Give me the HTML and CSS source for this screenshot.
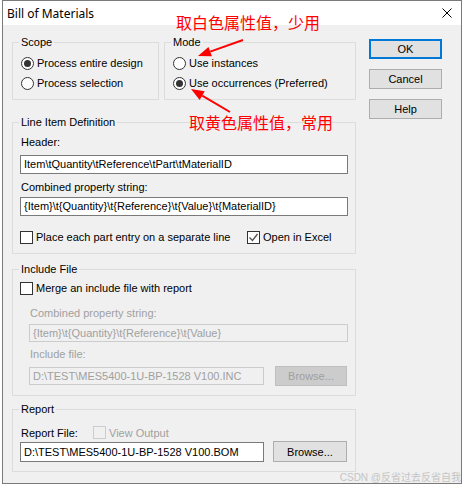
FILE: index.html
```html
<!DOCTYPE html>
<html>
<head>
<meta charset="utf-8">
<title>Bill of Materials</title>
<link rel="stylesheet" href="styles.css">
</head>
<body>
<div class="window">
  <div class="titlebar">
    <span class="title">Bill of Materials</span>
    <svg class="close" viewBox="0 0 10 10" width="10" height="10"><path d="M0.5 0.5 L9.5 9.5 M9.5 0.5 L0.5 9.5" stroke="#000" stroke-width="1" fill="none"/></svg>
  </div>
  <div class="client">
    <div class="main">
      <div class="toprow">
        <fieldset class="group scope">
          <legend>Scope</legend>
          <div class="opt"><span class="radio on"></span><span>Process entire design</span></div>
          <div class="opt"><span class="radio"></span><span>Process selection</span></div>
        </fieldset>
        <fieldset class="group mode">
          <legend>Mode</legend>
          <div class="opt"><span class="radio"></span><span>Use instances</span></div>
          <div class="opt"><span class="radio on"></span><span>Use occurrences (Preferred)</span></div>
        </fieldset>
      </div>

      <fieldset class="group lineitem">
        <legend>Line Item Definition</legend>
        <div class="lbl">Header:</div>
        <div class="edit e-header">Item\tQuantity\tReference\tPart\tMaterialID</div>
        <div class="lbl l-comb">Combined property string:</div>
        <div class="edit e-comb">{Item}\t{Quantity}\t{Reference}\t{Value}\t{MaterialID}</div>
        <div class="checkrow">
          <div class="chk wide"><span class="box"></span><span>Place each part entry on a separate line</span></div>
          <div class="chk"><span class="box"><svg viewBox="0 0 11 11" width="11" height="11"><path d="M1.5 5.5 L4.5 8.5 L9.5 2" stroke="#555" stroke-width="1.4" fill="none"/></svg></span><span>Open in Excel</span></div>
        </div>
      </fieldset>

      <fieldset class="group include">
        <legend>Include File</legend>
        <div class="chk merge"><span class="box"></span><span>Merge an include file with report</span></div>
        <div class="lbl dis l-icomb">Combined property string:</div>
        <div class="edit disabled e-icomb">{Item}\t{Quantity}\t{Reference}\t{Value}</div>
        <div class="lbl dis l-ifile">Include file:</div>
        <div class="filerow inc">
          <div class="edit disabled e-ifile">D:\TEST\MES5400-1U-BP-1528 V100.INC</div>
          <div class="btn btn-dis b-inc">Browse...</div>
        </div>
      </fieldset>

      <fieldset class="group report">
        <legend>Report</legend>
        <div class="reprow">
          <span class="replbl">Report File:</span>
          <div class="chk"><span class="box dis-box"></span><span class="distext">View Output</span></div>
        </div>
        <div class="filerow rep">
          <div class="edit e-rfile">D:\TEST\MES5400-1U-BP-1528 V100.BOM</div>
          <div class="btn b-rep">Browse...</div>
        </div>
      </fieldset>
    </div>

    <div class="buttons">
      <div class="btn default">OK</div>
      <div class="btn">Cancel</div>
      <div class="btn">Help</div>
    </div>
  </div>

  <svg class="annot" width="465" height="487" viewBox="0 0 465 487">
    <line x1="243" y1="40" x2="210.2" y2="51.6" stroke="#ff0000" stroke-width="2"/>
    <polygon points="198,56 211.9,56.3 208.5,46.9" fill="#ff0000"/>
    <line x1="230" y1="112" x2="202.2" y2="95.6" stroke="#ff0000" stroke-width="2"/>
    <polygon points="191,89 204.7,91.3 199.7,99.9" fill="#ff0000"/>
  </svg>
  <div class="note note1">取白色属性值，少用</div>
  <div class="note note2">取黄色属性值，常用</div>
  <div class="watermark">CSDN @反省过去反省自我</div>
</div>
</body>
</html>
```

FILE: styles.css
```css
html, body {
  margin: 0;
  background: #ffffff;
}
body {
  font-family: "Liberation Sans", Arial, sans-serif;
  font-size: 11px;
  color: #000;
}
.window {
  position: relative;
  margin-left: 2px;
  width: 460px;
  height: 484px;
  box-sizing: border-box;
  border: 1px solid #7a7a7a;
  background: #f0f0f0;
}
.titlebar {
  height: 24px;
  background: #ffffff;
  display: flex;
  align-items: center;
  padding-left: 4px;
}
.title {
  font-family: "Noto Sans", "Liberation Sans", sans-serif;
  font-size: 12px;
}
.close {
  margin-left: auto;
  margin-right: 9px;
}
.client {
  display: flex;
  gap: 13px;
  padding: 11px 0 0 9px;
}
.main {
  width: 344px;
  display: flex;
  flex-direction: column;
}
.toprow {
  display: flex;
  gap: 5px;
}
.group {
  margin: 0;
  min-width: 0;
  box-sizing: border-box;
  border: 1px solid #dcdcdc;
  padding: 0 7px 0 8px;
}
legend {
  padding: 0 2px;
  margin-left: -2px;
  line-height: 13px;
  font-size: 11px;
}
.group.scope {
  width: 147px;
  padding-top: 4px;
  padding-bottom: 6px;
}
.group.mode {
  width: 192px;
  padding-top: 4px;
  padding-bottom: 6px;
}
.opt {
  display: flex;
  align-items: center;
  height: 20px;
  gap: 3px;
  white-space: nowrap;
}
.radio {
  width: 13px;
  height: 13px;
  box-sizing: border-box;
  border: 1px solid #333;
  border-radius: 50%;
  background: #fff;
  display: flex;
  align-items: center;
  justify-content: center;
  flex: none;
}
.radio.on::after {
  content: "";
  width: 7px;
  height: 7px;
  border-radius: 50%;
  background: #333;
}
.lbl {
  line-height: 13px;
  height: 13px;
  white-space: nowrap;
}
.dis, .distext {
  color: #a0a0a0;
}
.edit {
  box-sizing: border-box;
  height: 19px;
  border: 1px solid #7a7a7a;
  background: #fff;
  padding-left: 3px;
  line-height: 17px;
  white-space: nowrap;
  overflow: hidden;
  margin-left: -1px;
}
.edit.disabled {
  background: #f0f0f0;
  border-color: #cccccc;
  color: #a0a0a0;
}
.group.lineitem {
  margin-top: 16px;
  padding-top: 7px;
  padding-bottom: 9px;
}
.e-header { margin-top: 6px; width: 328px; }
.l-comb { margin-top: 7px; }
.e-comb { margin-top: 3px; width: 328px; }
.checkrow {
  display: flex;
  margin-top: 14px;
  height: 14px;
  align-items: center;
}
.chk {
  display: flex;
  align-items: center;
  gap: 3px;
  white-space: nowrap;
}
.chk.wide {
  width: 227px;
  margin-left: -1px;
}
.box {
  width: 13px;
  height: 13px;
  box-sizing: border-box;
  border: 1px solid #333;
  background: #fff;
  display: flex;
  align-items: center;
  justify-content: center;
  flex: none;
}
.box.dis-box {
  border-color: #cccccc;
  background: #f0f0f0;
}
.group.include {
  margin-top: 9px;
  padding-top: 5px;
  padding-bottom: 9px;
}
.merge {
  height: 14px;
  margin-left: -1px;
}
.l-icomb { margin-top: 12px; margin-left: 9px; }
.e-icomb { margin-top: 4px; margin-left: 8px; width: 319px; height: 18px; line-height: 16px; }
.l-ifile { margin-top: 6px; margin-left: 9px; }
.filerow {
  display: flex;
  align-items: center;
}
.filerow.inc {
  margin-top: 5px;
  height: 20px;
  margin-left: 8px;
  gap: 11px;
}
.e-ifile { width: 235px; height: 18px; line-height: 16px; margin-left: 0; }
.group.report {
  margin-top: 7px;
  padding-top: 10px;
  padding-bottom: 9px;
}
.reprow {
  display: flex;
  align-items: center;
  height: 13px;
}
.replbl {
  width: 72px;
}
.filerow.rep {
  margin-top: 2px;
  height: 21px;
  align-items: flex-end;
  gap: 9px;
  margin-left: -1px;
}
.e-rfile { width: 244px; height: 20px; line-height: 18px; margin-left: 0; }
.btn {
  width: 73px;
  height: 20px;
  box-sizing: border-box;
  border: 1px solid #adadad;
  background: #e1e1e1;
  display: flex;
  align-items: center;
  justify-content: center;
  flex: none;
}
.btn.default {
  border: 2px solid #0078d7;
}
.btn-dis {
  background: #cccccc;
  border-color: #bfbfbf;
  color: #a0a0a0;
}
.b-inc { width: 72px; height: 20px; }
.b-rep { width: 74px; height: 21px; }
.buttons {
  display: flex;
  flex-direction: column;
  gap: 10px;
  padding-top: 3px;
}
.annot {
  position: absolute;
  left: -3px;
  top: -1px;
  pointer-events: none;
}
.note {
  position: absolute;
  font-family: "Noto Sans CJK SC", "Noto Sans", sans-serif;
  font-size: 16px;
  line-height: 16px;
  color: #ff0000;
  white-space: nowrap;
}
.note1 { left: 173px; top: 13px; }
.note2 { left: 186px; top: 113px; }
.watermark {
  position: absolute;
  right: 0;
  top: 471px;
  font-family: "Liberation Sans", "Noto Sans CJK SC", sans-serif;
  font-size: 10px;
  line-height: 12px;
  color: #c4c4c4;
  white-space: nowrap;
}
```
